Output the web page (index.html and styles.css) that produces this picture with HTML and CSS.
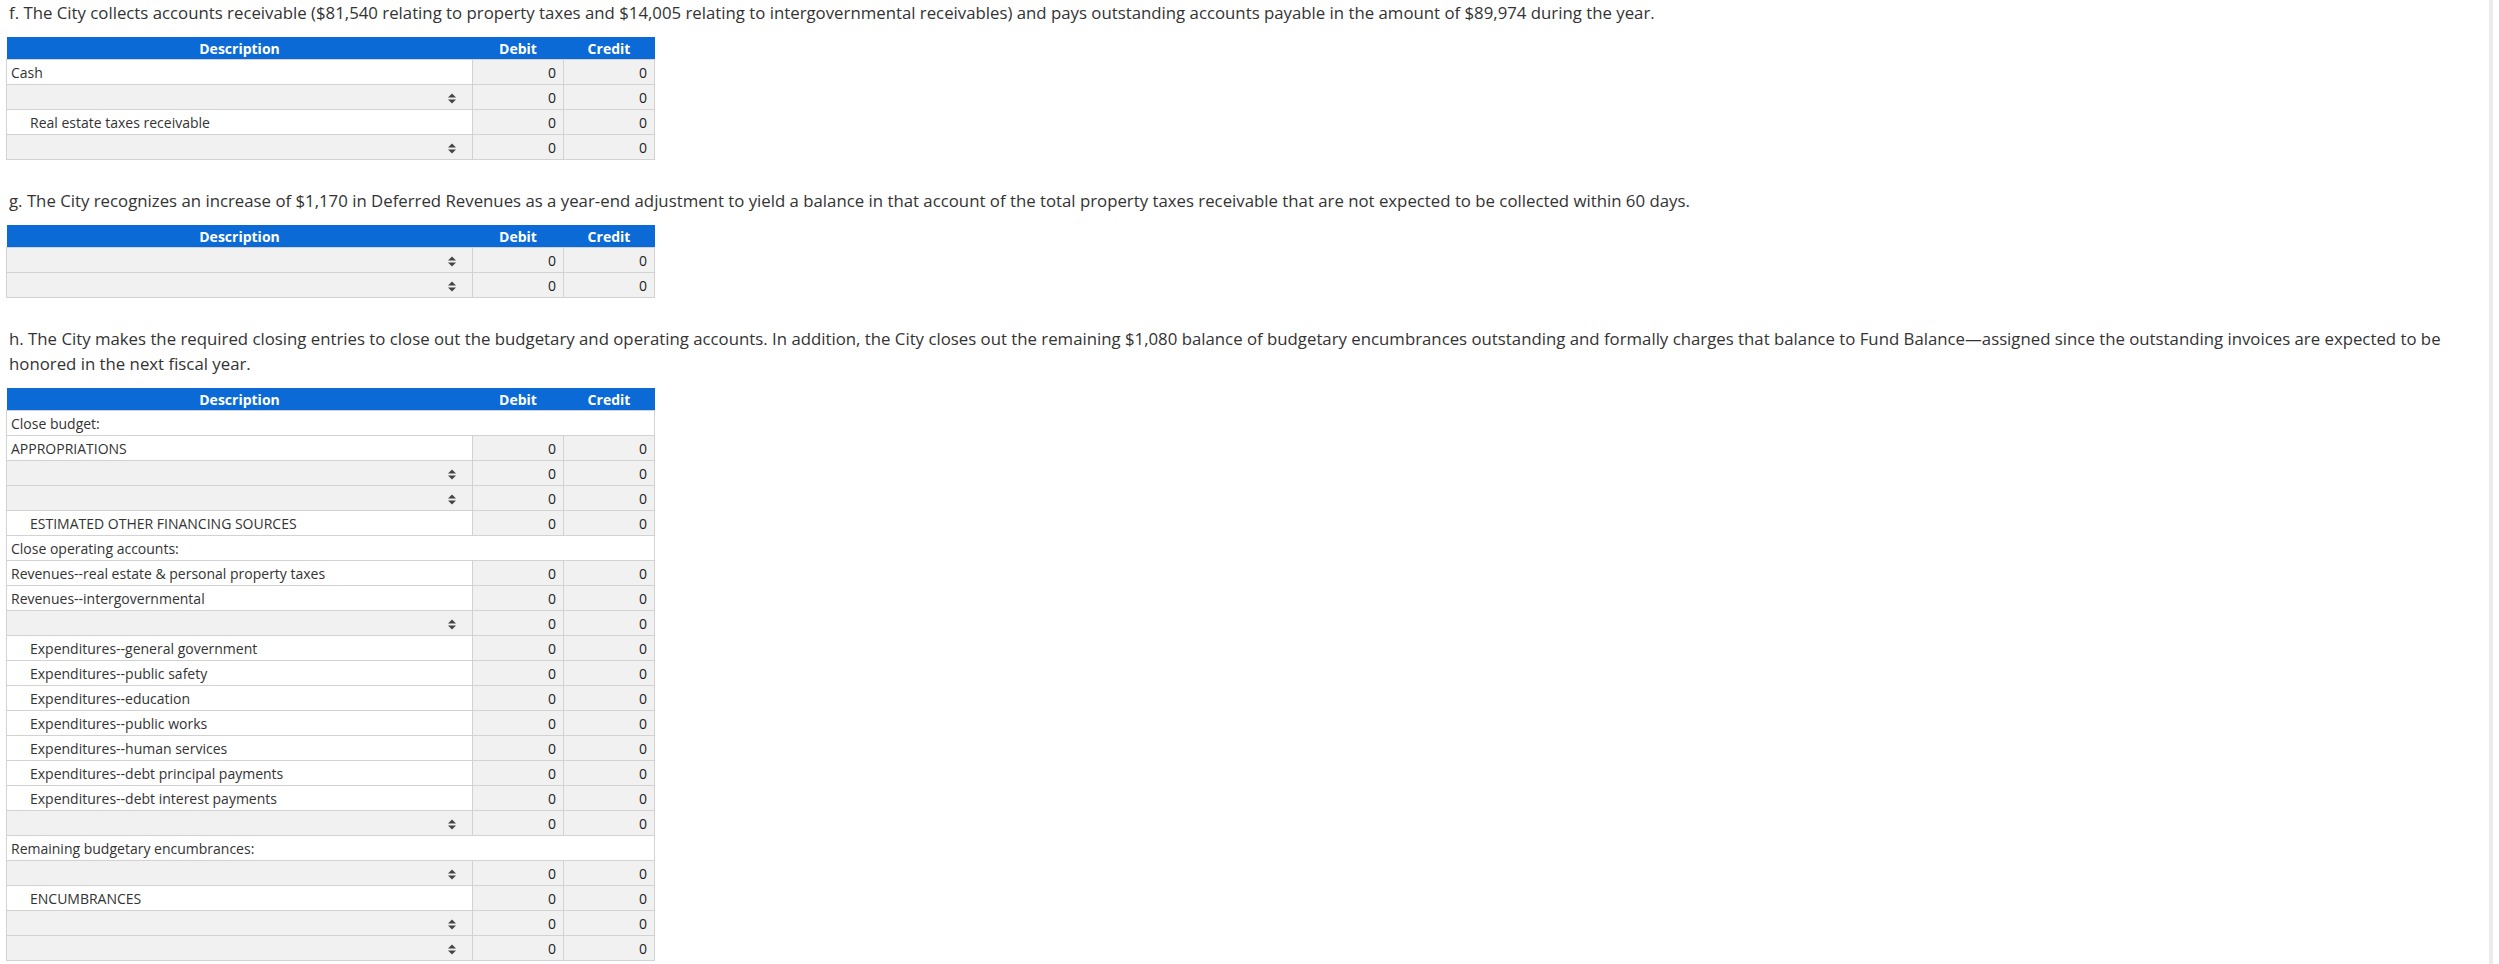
FILE: index.html
```html
<!DOCTYPE html>
<html lang="en">
<head>
    <meta charset="UTF-8">
    <meta name="viewport" content="width=device-width, initial-scale=1.0">
    <title>Journal Entries</title>
    <link rel="stylesheet" href="styles.css">
</head>
<body>
<div class="page">

    <div class="question">
        <p class="prompt">f. The City collects accounts receivable ($81,540 relating to property taxes and $14,005 relating to intergovernmental receivables) and pays outstanding accounts payable in the amount of $89,974 during the year.</p>
        <table class="journal">
            <colgroup><col class="c-desc"><col class="c-amt"><col class="c-amt"></colgroup>
            <thead>
                <tr><th>Description</th><th>Debit</th><th>Credit</th></tr>
            </thead>
            <tbody>
                <tr><td class="acct">Cash</td><td class="num">0</td><td class="num">0</td></tr>
                <tr><td class="pick"><svg class="arrows" width="8" height="11" viewBox="0 0 8 11"><path d="M0 4.5L4 0.5L8 4.5Z M0 6.5L4 10.5L8 6.5Z"/></svg></td><td class="num">0</td><td class="num">0</td></tr>
                <tr><td class="acct indent">Real estate taxes receivable</td><td class="num">0</td><td class="num">0</td></tr>
                <tr><td class="pick"><svg class="arrows" width="8" height="11" viewBox="0 0 8 11"><path d="M0 4.5L4 0.5L8 4.5Z M0 6.5L4 10.5L8 6.5Z"/></svg></td><td class="num">0</td><td class="num">0</td></tr>
            </tbody>
        </table>
    </div>

    <div class="question">
        <p class="prompt">g. The City recognizes an increase of $1,170 in Deferred Revenues as a year-end adjustment to yield a balance in that account of the total property taxes receivable that are not expected to be collected within 60 days.</p>
        <table class="journal">
            <colgroup><col class="c-desc"><col class="c-amt"><col class="c-amt"></colgroup>
            <thead>
                <tr><th>Description</th><th>Debit</th><th>Credit</th></tr>
            </thead>
            <tbody>
                <tr><td class="pick"><svg class="arrows" width="8" height="11" viewBox="0 0 8 11"><path d="M0 4.5L4 0.5L8 4.5Z M0 6.5L4 10.5L8 6.5Z"/></svg></td><td class="num">0</td><td class="num">0</td></tr>
                <tr><td class="pick"><svg class="arrows" width="8" height="11" viewBox="0 0 8 11"><path d="M0 4.5L4 0.5L8 4.5Z M0 6.5L4 10.5L8 6.5Z"/></svg></td><td class="num">0</td><td class="num">0</td></tr>
            </tbody>
        </table>
    </div>

    <div class="question">
        <p class="prompt">h. The City makes the required closing entries to close out the budgetary and operating accounts. In addition, the City closes out the remaining $1,080 balance of budgetary encumbrances outstanding and formally charges that balance to Fund Balance&mdash;assigned since the outstanding invoices are expected to be honored in the next fiscal year.</p>
        <table class="journal">
            <colgroup><col class="c-desc"><col class="c-amt"><col class="c-amt"></colgroup>
            <thead>
                <tr><th>Description</th><th>Debit</th><th>Credit</th></tr>
            </thead>
            <tbody>
                <tr><td class="label" colspan="3">Close budget:</td></tr>
                <tr><td class="acct">APPROPRIATIONS</td><td class="num">0</td><td class="num">0</td></tr>
                <tr><td class="pick"><svg class="arrows" width="8" height="11" viewBox="0 0 8 11"><path d="M0 4.5L4 0.5L8 4.5Z M0 6.5L4 10.5L8 6.5Z"/></svg></td><td class="num">0</td><td class="num">0</td></tr>
                <tr><td class="pick"><svg class="arrows" width="8" height="11" viewBox="0 0 8 11"><path d="M0 4.5L4 0.5L8 4.5Z M0 6.5L4 10.5L8 6.5Z"/></svg></td><td class="num">0</td><td class="num">0</td></tr>
                <tr><td class="acct indent">ESTIMATED OTHER FINANCING SOURCES</td><td class="num">0</td><td class="num">0</td></tr>
                <tr><td class="label" colspan="3">Close operating accounts:</td></tr>
                <tr><td class="acct">Revenues--real estate &amp; personal property taxes</td><td class="num">0</td><td class="num">0</td></tr>
                <tr><td class="acct">Revenues--intergovernmental</td><td class="num">0</td><td class="num">0</td></tr>
                <tr><td class="pick"><svg class="arrows" width="8" height="11" viewBox="0 0 8 11"><path d="M0 4.5L4 0.5L8 4.5Z M0 6.5L4 10.5L8 6.5Z"/></svg></td><td class="num">0</td><td class="num">0</td></tr>
                <tr><td class="acct indent">Expenditures--general government</td><td class="num">0</td><td class="num">0</td></tr>
                <tr><td class="acct indent">Expenditures--public safety</td><td class="num">0</td><td class="num">0</td></tr>
                <tr><td class="acct indent">Expenditures--education</td><td class="num">0</td><td class="num">0</td></tr>
                <tr><td class="acct indent">Expenditures--public works</td><td class="num">0</td><td class="num">0</td></tr>
                <tr><td class="acct indent">Expenditures--human services</td><td class="num">0</td><td class="num">0</td></tr>
                <tr><td class="acct indent">Expenditures--debt principal payments</td><td class="num">0</td><td class="num">0</td></tr>
                <tr><td class="acct indent">Expenditures--debt interest payments</td><td class="num">0</td><td class="num">0</td></tr>
                <tr><td class="pick"><svg class="arrows" width="8" height="11" viewBox="0 0 8 11"><path d="M0 4.5L4 0.5L8 4.5Z M0 6.5L4 10.5L8 6.5Z"/></svg></td><td class="num">0</td><td class="num">0</td></tr>
                <tr><td class="label" colspan="3">Remaining budgetary encumbrances:</td></tr>
                <tr><td class="pick"><svg class="arrows" width="8" height="11" viewBox="0 0 8 11"><path d="M0 4.5L4 0.5L8 4.5Z M0 6.5L4 10.5L8 6.5Z"/></svg></td><td class="num">0</td><td class="num">0</td></tr>
                <tr><td class="acct indent">ENCUMBRANCES</td><td class="num">0</td><td class="num">0</td></tr>
                <tr><td class="pick"><svg class="arrows" width="8" height="11" viewBox="0 0 8 11"><path d="M0 4.5L4 0.5L8 4.5Z M0 6.5L4 10.5L8 6.5Z"/></svg></td><td class="num">0</td><td class="num">0</td></tr>
                <tr><td class="pick"><svg class="arrows" width="8" height="11" viewBox="0 0 8 11"><path d="M0 4.5L4 0.5L8 4.5Z M0 6.5L4 10.5L8 6.5Z"/></svg></td><td class="num">0</td><td class="num">0</td></tr>
            </tbody>
        </table>
    </div>

</div>
</body>
</html>
```

FILE: styles.css
```css
html, body { margin: 0; padding: 0; background: #fff; }
body { font-family: "Open Sans", Arial, sans-serif; color: #333; }

.page { width: calc(100% - 6px); min-height: 964px; border-right: 4px solid #ececec; padding: 0 0 0 6px; box-sizing: border-box; }

.question { margin-bottom: 28px; }
.prompt { margin: 0 0 12px 3px; font-size: 16.8px; line-height: 25px; padding-right: 10px; }

.journal { border-collapse: collapse; table-layout: fixed; width: 647px; font-size: 14px; }
.c-desc { width: 466px; }
.c-amt { width: 91px; }

.journal th { background: #0b6ad6; color: #fff; font-weight: bold; height: 22px; padding: 0; text-align: center; }
.journal td { height: 25px; padding: 0 6px; border: 1px solid #d2d2d2; box-sizing: border-box; white-space: nowrap; }

.journal td.acct, .journal td.label { background: #fff; text-align: left; padding-left: 4px; }
.journal td.indent { padding-left: 23px; }
.journal td.num { background: #f1f1f1; text-align: right; padding-right: 7px; color: #222; }
.journal td.pick { background: #f1f1f1; text-align: right; padding-right: 16px; }

.arrows { display: inline-block; vertical-align: middle; fill: #444; }
```
